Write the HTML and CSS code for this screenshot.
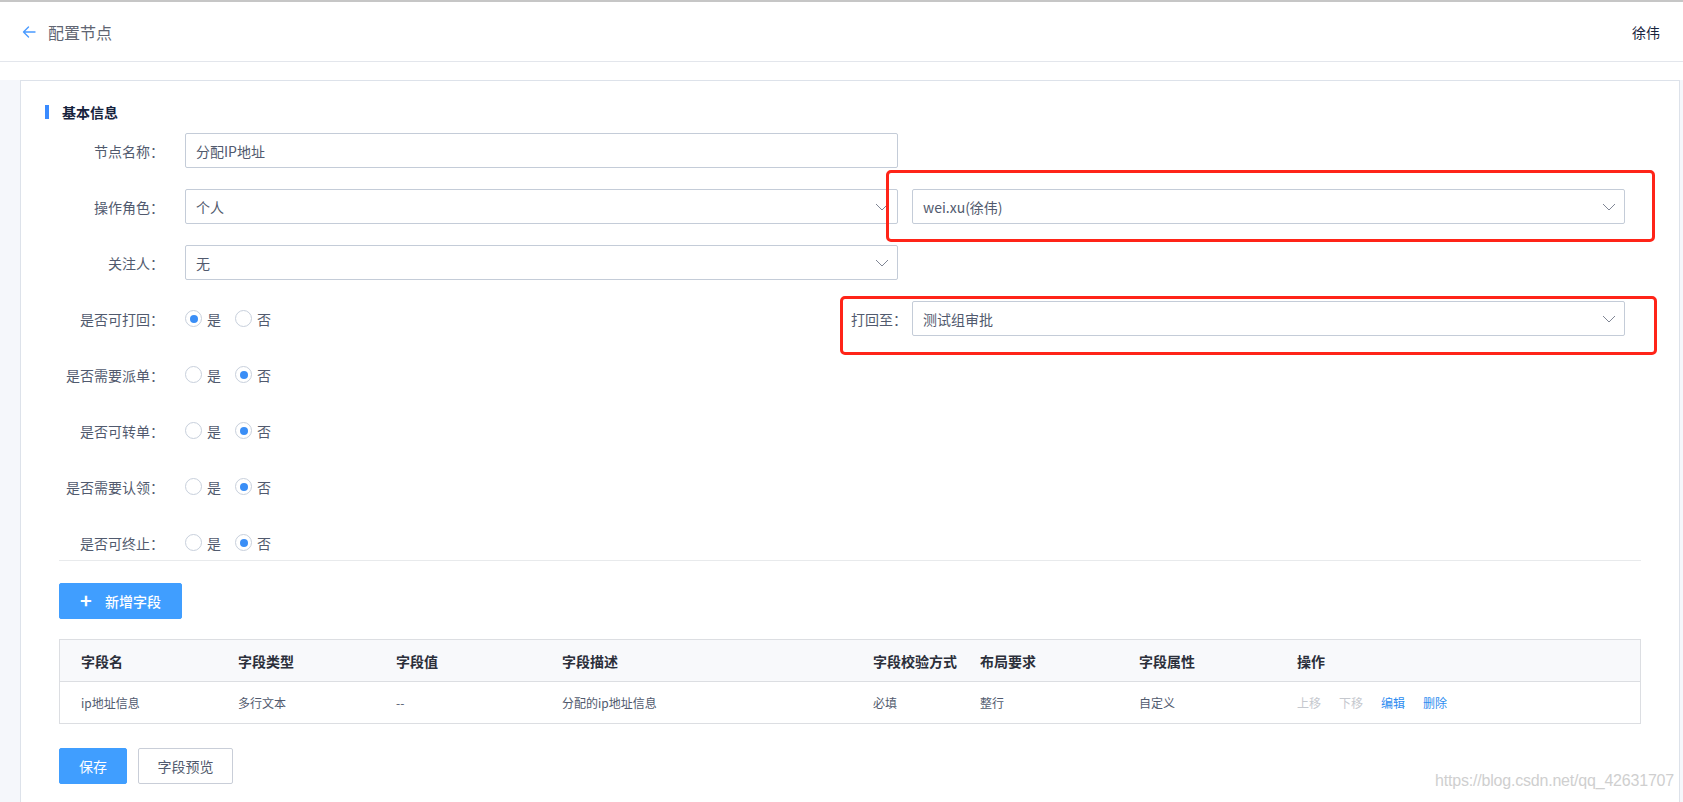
FILE: index.html
```html
<!DOCTYPE html>
<html lang="zh-CN">
<head>
<meta charset="utf-8">
<title>配置节点</title>
<link rel="stylesheet" href="styles.css">
</head>
<body>
<div class="page">
  <header class="topbar">
    <div class="back">
      <svg class="back-icon" width="14" height="12" viewBox="0 0 14 12"><path d="M13 6H1.5M6.5 1L1.5 6l5 5" fill="none" stroke="#4a9bff" stroke-width="1.4" stroke-linecap="round" stroke-linejoin="round"/></svg>
      <span class="title">配置节点</span>
    </div>
    <div class="user">徐伟</div>
  </header>
  <div class="spacer"></div>
  <main class="main">
    <section class="card">
      <h2 class="section-title">基本信息</h2>
      <div class="form">
        <div class="row">
          <label class="label">节点名称：</label>
          <div class="control input">分配IP地址</div>
        </div>
        <div class="row">
          <label class="label">操作角色：</label>
          <div class="control select"><span>个人</span><svg class="chev" width="14" height="8" viewBox="0 0 14 8"><path d="M1 1l6 6 6-6" fill="none" stroke="#808695" stroke-width="1"/></svg></div>
          <div class="control select second"><span>wei.xu(徐伟)</span><svg class="chev" width="14" height="8" viewBox="0 0 14 8"><path d="M1 1l6 6 6-6" fill="none" stroke="#808695" stroke-width="1"/></svg></div>
        </div>
        <div class="row">
          <label class="label">关注人：</label>
          <div class="control select"><span>无</span><svg class="chev" width="14" height="8" viewBox="0 0 14 8"><path d="M1 1l6 6 6-6" fill="none" stroke="#808695" stroke-width="1"/></svg></div>
        </div>
        <div class="row">
          <label class="label">是否可打回：</label>
          <div class="radios grow">
            <span class="radio checked"></span><span class="rtext">是</span>
            <span class="radio"></span><span class="rtext">否</span>
          </div>
          <div class="subfield">
            <label class="sublabel">打回至：</label>
            <div class="control select"><span>测试组审批</span><svg class="chev" width="14" height="8" viewBox="0 0 14 8"><path d="M1 1l6 6 6-6" fill="none" stroke="#808695" stroke-width="1"/></svg></div>
          </div>
        </div>
        <div class="row">
          <label class="label">是否需要派单：</label>
          <div class="radios">
            <span class="radio"></span><span class="rtext">是</span>
            <span class="radio checked"></span><span class="rtext">否</span>
          </div>
        </div>
        <div class="row">
          <label class="label">是否可转单：</label>
          <div class="radios">
            <span class="radio"></span><span class="rtext">是</span>
            <span class="radio checked"></span><span class="rtext">否</span>
          </div>
        </div>
        <div class="row">
          <label class="label">是否需要认领：</label>
          <div class="radios">
            <span class="radio"></span><span class="rtext">是</span>
            <span class="radio checked"></span><span class="rtext">否</span>
          </div>
        </div>
        <div class="row last">
          <label class="label">是否可终止：</label>
          <div class="radios">
            <span class="radio"></span><span class="rtext">是</span>
            <span class="radio checked"></span><span class="rtext">否</span>
          </div>
        </div>
      </div>
      <div class="divider"></div>
      <button class="btn primary add"><span class="plus">+</span>新增字段</button>
      <div class="table">
        <div class="tr thead">
          <div class="td c1">字段名</div>
          <div class="td c2">字段类型</div>
          <div class="td c3">字段值</div>
          <div class="td c4">字段描述</div>
          <div class="td c5">字段校验方式</div>
          <div class="td c6">布局要求</div>
          <div class="td c7">字段属性</div>
          <div class="td c8">操作</div>
        </div>
        <div class="tr tbody">
          <div class="td c1">ip地址信息</div>
          <div class="td c2">多行文本</div>
          <div class="td c3">--</div>
          <div class="td c4">分配的ip地址信息</div>
          <div class="td c5">必填</div>
          <div class="td c6">整行</div>
          <div class="td c7">自定义</div>
          <div class="td c8 actions">
            <span class="act disabled">上移</span>
            <span class="act disabled">下移</span>
            <span class="act link">编辑</span>
            <span class="act link">删除</span>
          </div>
        </div>
      </div>
      <div class="footer-btns">
        <button class="btn primary save">保存</button>
        <button class="btn ghost">字段预览</button>
      </div>
    </section>
  </main>
  <div class="mark mark1"></div>
  <div class="mark mark2"></div>
  <div class="watermark">https://blog.csdn.net/qq_42631707</div>
</div>
</body>
</html>
```

FILE: styles.css
```css
* { box-sizing: border-box; }
html, body { margin: 0; padding: 0; }
body {
  width: 1683px;
  height: 802px;
  overflow: hidden;
  background: #fff;
  font-family: "Noto Sans CJK SC", "Microsoft YaHei", "Noto Sans", sans-serif;
  color: #515a6e;
  font-size: 14px;
}
.page { position: relative; width: 1683px; height: 802px; overflow: hidden; }

.topbar {
  height: 62px;
  border-top: 2px solid #c6c6c6;
  border-bottom: 1px solid #e3e6ec;
  display: flex;
  align-items: center;
  justify-content: space-between;
  padding: 0 23px 0 22px;
}
.back { display: flex; align-items: center; }
.back-icon { display: block; margin-right: 12px; }
.title { font-size: 16px; color: #606572; line-height: 20px; }
.user { font-size: 14px; color: #17233d; line-height: 20px; }

.spacer { height: 18px; background: #fff; }

.main {
  background: #f5f7fb;
  padding: 0 3px 0 20px;
  height: 740px;
}
.card {
  background: #fff;
  border: 1px solid #dde2ea;
  border-bottom: none;
  height: 740px;
  padding: 21px 38px 0 38px;
}
.section-title {
  margin: 0 0 11px -14px;
  font-size: 14px;
  font-weight: 700;
  color: #17233d;
  line-height: 20px;
  height: 20px;
  display: flex;
  align-items: center;
}
.section-title::before {
  content: "";
  width: 4px;
  height: 14px;
  background: #3a8bff;
  margin-right: 13px;
}

.form { width: 1566px; }
.row {
  display: flex;
  align-items: center;
  height: 35px;
  margin-bottom: 21px;
}
.row.last { margin-bottom: 0; }
.label {
  width: 126px;
  flex: none;
  padding-right: 21px;
  text-align: right;
  color: #515a6e;
  white-space: nowrap;
}
.control {
  width: 713px;
  height: 35px;
  flex: none;
  border: 1px solid #c4ccd8;
  border-radius: 2px;
  padding: 0 8px 0 10px;
  display: flex;
  align-items: center;
  color: #515a6e;
  background: #fff;
}
.select { justify-content: space-between; }
.chev { display: block; flex: none; }
.second { margin-left: 14px; }

.radios { display: flex; align-items: center; }
.grow { flex: 1; }
.radio {
  width: 17px;
  height: 17px;
  border: 1px solid #c8d0dc;
  border-radius: 50%;
  position: relative;
  flex: none;
  background: #fff;
}
.radio.checked::after {
  content: "";
  position: absolute;
  width: 8px;
  height: 8px;
  border-radius: 50%;
  background: #3a8ef6;
  left: 3.5px;
  top: 3.5px;
}
.rtext { margin: 0 14px 0 5px; color: #515a6e; }

.subfield { display: flex; align-items: center; }
.sublabel { padding-right: 5px; color: #515a6e; white-space: nowrap; }

.divider { height: 1px; background: #e8eaec; margin-bottom: 22px; }

.btn {
  font-family: inherit;
  font-size: 14px;
  height: 36px;
  border-radius: 2px;
  border: 1px solid transparent;
  padding: 0;
  cursor: pointer;
  display: inline-flex;
  align-items: center;
  justify-content: center;
}
.primary { background: #409eff; color: #fff; border-color: #409eff; }
.add { width: 123px; font-weight: 500; }
.plus { font-size: 20px; font-weight: 700; margin-right: 13px; line-height: 1; margin-top: -2px; }

.table {
  margin-top: 20px;
  border: 1px solid #dcdee2;
  width: 1582px;
}
.tr { display: flex; }
.thead { background: #f8f9fb; height: 42px; border-bottom: 1px solid #dcdee2; }
.tbody { height: 41px; }
.td { display: flex; align-items: center; padding-left: 21px; flex: none; }
.thead .td { font-weight: 700; color: #2b2f3a; font-size: 14px; }
.tbody .td { font-size: 12px; color: #515a6e; }
.c1 { width: 157px; }
.c2 { width: 158px; }
.c3 { width: 166px; }
.c4 { width: 311px; }
.c5 { width: 107px; }
.c6 { width: 159px; }
.c7 { width: 158px; }
.c8 { width: 364px; }
.act { margin-right: 18px; }
.disabled { color: #c5c8ce; }
.link { color: #2d8cf0; }

.footer-btns { margin-top: 24px; display: flex; gap: 11px; }
.save { width: 68px; }
.ghost { width: 95px; background: #fff; border-color: #c9ced8; color: #515a6e; }

.mark {
  position: absolute;
  border: 3px solid #ff2418;
  border-radius: 5px;
}
.mark1 { left: 886px; top: 170px; width: 769px; height: 72px; }
.mark2 { left: 840px; top: 296px; width: 817px; height: 59px; }

.watermark {
  position: absolute;
  right: 9px;
  top: 772px;
  font-family: "Liberation Sans", Arial, sans-serif;
  font-size: 16px;
  color: #cfcfcf;
  letter-spacing: -0.2px;
}
```
